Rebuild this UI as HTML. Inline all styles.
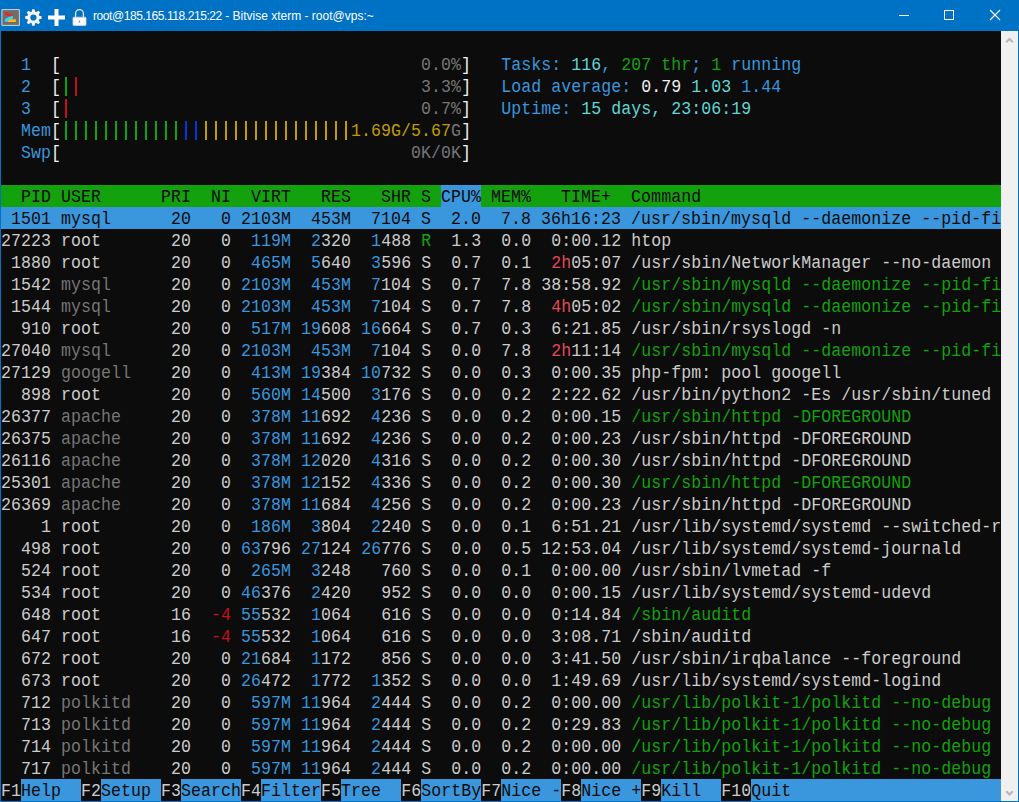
<!DOCTYPE html>
<html><head><meta charset="utf-8"><style>
html,body{margin:0;padding:0;}
body{width:1019px;height:802px;background:#0072C6;position:relative;overflow:hidden;}
#title{position:absolute;left:0;top:0;width:1019px;height:31px;background:#0072C6;}
#title .t{position:absolute;left:93px;top:9px;font:12px "Liberation Sans",sans-serif;letter-spacing:-0.2px;color:#fff;white-space:pre;}
#term{position:absolute;left:1px;top:31px;width:1000px;height:770px;background:#0C0C0C;overflow:hidden;}
#sb{position:absolute;left:1001px;top:31px;width:17px;height:770px;background:#F0F0F0;}
.r{position:absolute;left:0;height:22px;width:1000px;white-space:pre;font-family:"Liberation Mono",monospace;font-size:18px;letter-spacing:0.0696px;line-height:22px;color:#CCCCCC;transform:scaleX(0.92);transform-origin:0 0;}
.bg{position:absolute;height:22px;}
</style></head><body>

<div id="title">
<svg width="100" height="31" style="position:absolute;left:0;top:0">
<path d="M1.9 9.6 H19.4 V25.4 H1.9 Z" fill="#6E6E6E" stroke="#D9D2CC" stroke-width="1" stroke-linejoin="bevel"/>
<path d="M5 12 L7 12.2 L9.5 14 L12.9 15 L12.9 15.7 L9.3 16.6 L5 14.6 Z" fill="#F5231E"/>
<path d="M4.9 19.2 L9 16.8 L13 16 L13 18.6 L7.5 21.8 L4.9 21.8 Z" fill="#38D4F5"/>
<path d="M7.8 20.8 L10.5 19.3 L15.9 19.2 L15.9 21.9 L7.8 21.9 Z" fill="#FDB813"/>
<g transform="translate(33.4,17.5)" fill="#F6F4F2">
<circle r="6"/>
<path transform="rotate(0)" d="M-1.9 -5 L-1.2 -8.2 L1.2 -8.2 L1.9 -5 Z"/><path transform="rotate(45)" d="M-1.9 -5 L-1.2 -8.2 L1.2 -8.2 L1.9 -5 Z"/><path transform="rotate(90)" d="M-1.9 -5 L-1.2 -8.2 L1.2 -8.2 L1.9 -5 Z"/><path transform="rotate(135)" d="M-1.9 -5 L-1.2 -8.2 L1.2 -8.2 L1.9 -5 Z"/><path transform="rotate(180)" d="M-1.9 -5 L-1.2 -8.2 L1.2 -8.2 L1.9 -5 Z"/><path transform="rotate(225)" d="M-1.9 -5 L-1.2 -8.2 L1.2 -8.2 L1.9 -5 Z"/><path transform="rotate(270)" d="M-1.9 -5 L-1.2 -8.2 L1.2 -8.2 L1.9 -5 Z"/><path transform="rotate(315)" d="M-1.9 -5 L-1.2 -8.2 L1.2 -8.2 L1.9 -5 Z"/>
<circle r="3.1" fill="#0072C6"/>
</g>
<rect x="48" y="15.5" width="17" height="4" fill="#fff"/>
<rect x="54.5" y="9" width="4" height="17" fill="#fff"/>
<path d="M75.6 17.5 V13.5 A3.9 3.9 0 0 1 83.4 13.5 V17.5" fill="none" stroke="#E8E4E0" stroke-width="1.3"/>
<rect x="73" y="17.2" width="13" height="8.3" rx="0.8" fill="#FAFAFA" stroke="#DDD6D0" stroke-width="0.8"/>
<path d="M79.5 19.8 L78.6 22.5 H80.4 Z" fill="#888"/>
</svg>
<div class="t"><span style="letter-spacing:-0.43px">root@185.165.118.215:22</span><span style="letter-spacing:0px"> - Bitvise xterm - root@vps:~</span></div>
<svg width="120" height="31" style="position:absolute;left:890px;top:0">
<rect x="9" y="15" width="10" height="1" fill="#fff"/>
<rect x="54.5" y="10.5" width="9" height="9" fill="none" stroke="#fff" stroke-width="1"/>
<path d="M100 10 L110 20 M110 10 L100 20" stroke="#fff" stroke-width="1.1"/>
</svg>
</div>
<div id="term">
<div style="position:absolute;top:46px;left:64px;width:2px;height:19px;background:#13A10E"></div>
<div style="position:absolute;top:46px;left:74px;width:2px;height:19px;background:#C50F1F"></div>
<div style="position:absolute;top:68px;left:64px;width:2px;height:19px;background:#C50F1F"></div>
<div style="position:absolute;top:90px;left:64px;width:2px;height:19px;background:#13A10E"></div>
<div style="position:absolute;top:90px;left:74px;width:2px;height:19px;background:#13A10E"></div>
<div style="position:absolute;top:90px;left:84px;width:2px;height:19px;background:#13A10E"></div>
<div style="position:absolute;top:90px;left:94px;width:2px;height:19px;background:#13A10E"></div>
<div style="position:absolute;top:90px;left:104px;width:2px;height:19px;background:#13A10E"></div>
<div style="position:absolute;top:90px;left:114px;width:2px;height:19px;background:#13A10E"></div>
<div style="position:absolute;top:90px;left:124px;width:2px;height:19px;background:#13A10E"></div>
<div style="position:absolute;top:90px;left:134px;width:2px;height:19px;background:#13A10E"></div>
<div style="position:absolute;top:90px;left:144px;width:2px;height:19px;background:#13A10E"></div>
<div style="position:absolute;top:90px;left:154px;width:2px;height:19px;background:#13A10E"></div>
<div style="position:absolute;top:90px;left:164px;width:2px;height:19px;background:#13A10E"></div>
<div style="position:absolute;top:90px;left:174px;width:2px;height:19px;background:#13A10E"></div>
<div style="position:absolute;top:90px;left:184px;width:2px;height:19px;background:#0037DA"></div>
<div style="position:absolute;top:90px;left:194px;width:2px;height:19px;background:#0037DA"></div>
<div style="position:absolute;top:90px;left:204px;width:2px;height:19px;background:#C19C00"></div>
<div style="position:absolute;top:90px;left:214px;width:2px;height:19px;background:#C19C00"></div>
<div style="position:absolute;top:90px;left:224px;width:2px;height:19px;background:#C19C00"></div>
<div style="position:absolute;top:90px;left:234px;width:2px;height:19px;background:#C19C00"></div>
<div style="position:absolute;top:90px;left:244px;width:2px;height:19px;background:#C19C00"></div>
<div style="position:absolute;top:90px;left:254px;width:2px;height:19px;background:#C19C00"></div>
<div style="position:absolute;top:90px;left:264px;width:2px;height:19px;background:#C19C00"></div>
<div style="position:absolute;top:90px;left:274px;width:2px;height:19px;background:#C19C00"></div>
<div style="position:absolute;top:90px;left:284px;width:2px;height:19px;background:#C19C00"></div>
<div style="position:absolute;top:90px;left:294px;width:2px;height:19px;background:#C19C00"></div>
<div style="position:absolute;top:90px;left:304px;width:2px;height:19px;background:#C19C00"></div>
<div style="position:absolute;top:90px;left:314px;width:2px;height:19px;background:#C19C00"></div>
<div style="position:absolute;top:90px;left:324px;width:2px;height:19px;background:#C19C00"></div>
<div style="position:absolute;top:90px;left:334px;width:2px;height:19px;background:#C19C00"></div>
<div style="position:absolute;top:90px;left:344px;width:2px;height:19px;background:#C19C00"></div>
<div class="bg" style="top:154px;left:0;width:1000px;background:#13A10E"></div>
<div class="bg" style="top:154px;left:440px;width:40px;background:#3A96DD"></div>
<div class="bg" style="top:176px;left:0;width:1000px;background:#3A96DD"></div>
<div class="bg" style="top:748px;left:0;width:1000px;background:#3A96DD"></div>
<div class="bg" style="top:748px;left:0px;width:20px;background:#0C0C0C"></div>
<div class="bg" style="top:748px;left:80px;width:20px;background:#0C0C0C"></div>
<div class="bg" style="top:748px;left:160px;width:20px;background:#0C0C0C"></div>
<div class="bg" style="top:748px;left:240px;width:20px;background:#0C0C0C"></div>
<div class="bg" style="top:748px;left:320px;width:20px;background:#0C0C0C"></div>
<div class="bg" style="top:748px;left:400px;width:20px;background:#0C0C0C"></div>
<div class="bg" style="top:748px;left:480px;width:20px;background:#0C0C0C"></div>
<div class="bg" style="top:748px;left:560px;width:20px;background:#0C0C0C"></div>
<div class="bg" style="top:748px;left:640px;width:20px;background:#0C0C0C"></div>
<div class="bg" style="top:748px;left:720px;width:30px;background:#0C0C0C"></div>
<div class="r" style="top:23px;">  <span style="color:#3A96DD;">1</span>  <span style="color:#F2F2F2;">[</span>                                    <span style="color:#767676;">0.0%</span><span style="color:#F2F2F2;">]</span>   <span style="color:#3A96DD;">Tasks: </span><span style="color:#61D6D6;">116</span><span style="color:#3A96DD;">, </span><span style="color:#13A10E;">207 thr</span><span style="color:#3A96DD;">; </span><span style="color:#13A10E;">1</span><span style="color:#3A96DD;"> running</span></div>
<div class="r" style="top:45px;">  <span style="color:#3A96DD;">2</span>  <span style="color:#F2F2F2;">[</span><span style="color:#13A10E;"> </span><span style="color:#C50F1F;"> </span>                                  <span style="color:#767676;">3.3%</span><span style="color:#F2F2F2;">]</span>   <span style="color:#3A96DD;">Load average: </span><span style="color:#F2F2F2;">0.79 </span><span style="color:#61D6D6;">1.03 </span><span style="color:#3A96DD;">1.44</span></div>
<div class="r" style="top:67px;">  <span style="color:#3A96DD;">3</span>  <span style="color:#F2F2F2;">[</span><span style="color:#C50F1F;"> </span>                                   <span style="color:#767676;">0.7%</span><span style="color:#F2F2F2;">]</span>   <span style="color:#3A96DD;">Uptime: </span><span style="color:#61D6D6;">15 days, 23:06:19</span></div>
<div class="r" style="top:89px;">  <span style="color:#3A96DD;">Mem</span><span style="color:#F2F2F2;">[</span><span style="color:#13A10E;">            </span><span style="color:#0037DA;">  </span><span style="color:#C19C00;">               </span><span style="color:#C19C00;">1.69G/5.67</span><span style="color:#767676;">G</span><span style="color:#F2F2F2;">]</span></div>
<div class="r" style="top:111px;">  <span style="color:#3A96DD;">Swp</span><span style="color:#F2F2F2;">[</span>                                   <span style="color:#767676;">0K/0K</span><span style="color:#F2F2F2;">]</span></div>
<div class="r" style="top:155px;"><span style="color:#0C0C0C;">  PID USER      PRI  NI  VIRT   RES   SHR S </span><span style="color:#0C0C0C;">CPU%</span><span style="color:#0C0C0C;"> MEM%   TIME+  Command</span></div>
<div class="r" style="top:177px;"><span style="color:#0C0C0C;"> 1501 mysql      20   0 2103M  453M  7104 S  2.0  7.8 36h16:23 /usr/sbin/mysqld --daemonize --pid-file=/var/run/mysqld/mysqld.pid</span></div>
<div class="r" style="top:199px;"><span style="color:#CCCCCC;">27223 </span><span style="color:#CCCCCC;">root      </span><span style="color:#CCCCCC;"> 20 </span><span style="color:#CCCCCC;">  0</span> <span style="color:#3A96DD;"> 119M</span> <span style="color:#3A96DD;"> 2</span><span style="color:#CCCCCC;">320</span> <span style="color:#3A96DD;"> 1</span><span style="color:#CCCCCC;">488</span> <span style="color:#13A10E;">R</span> <span style="color:#CCCCCC;"> 1.3  0.0 </span><span style="color:#CCCCCC;"> 0:00.12</span> <span style="color:#CCCCCC;">htop</span></div>
<div class="r" style="top:221px;"><span style="color:#CCCCCC;"> 1880 </span><span style="color:#CCCCCC;">root      </span><span style="color:#CCCCCC;"> 20 </span><span style="color:#CCCCCC;">  0</span> <span style="color:#3A96DD;"> 465M</span> <span style="color:#3A96DD;"> 5</span><span style="color:#CCCCCC;">640</span> <span style="color:#3A96DD;"> 3</span><span style="color:#CCCCCC;">596</span> <span style="color:#CCCCCC;">S</span> <span style="color:#CCCCCC;"> 0.7  0.1 </span><span style="color:#E74856;"> 2h</span><span style="color:#CCCCCC;">05:07</span> <span style="color:#CCCCCC;">/usr/sbin/NetworkManager --no-daemon</span></div>
<div class="r" style="top:243px;"><span style="color:#CCCCCC;"> 1542 </span><span style="color:#767676;">mysql     </span><span style="color:#CCCCCC;"> 20 </span><span style="color:#CCCCCC;">  0</span> <span style="color:#3A96DD;">2103M</span> <span style="color:#3A96DD;"> 453M</span> <span style="color:#3A96DD;"> 7</span><span style="color:#CCCCCC;">104</span> <span style="color:#CCCCCC;">S</span> <span style="color:#CCCCCC;"> 0.7  7.8 </span><span style="color:#CCCCCC;">38:58.92</span> <span style="color:#13A10E;">/usr/sbin/mysqld --daemonize --pid-file=/var/run</span></div>
<div class="r" style="top:265px;"><span style="color:#CCCCCC;"> 1544 </span><span style="color:#767676;">mysql     </span><span style="color:#CCCCCC;"> 20 </span><span style="color:#CCCCCC;">  0</span> <span style="color:#3A96DD;">2103M</span> <span style="color:#3A96DD;"> 453M</span> <span style="color:#3A96DD;"> 7</span><span style="color:#CCCCCC;">104</span> <span style="color:#CCCCCC;">S</span> <span style="color:#CCCCCC;"> 0.7  7.8 </span><span style="color:#E74856;"> 4h</span><span style="color:#CCCCCC;">05:02</span> <span style="color:#13A10E;">/usr/sbin/mysqld --daemonize --pid-file=/var/run</span></div>
<div class="r" style="top:287px;"><span style="color:#CCCCCC;">  910 </span><span style="color:#CCCCCC;">root      </span><span style="color:#CCCCCC;"> 20 </span><span style="color:#CCCCCC;">  0</span> <span style="color:#3A96DD;"> 517M</span> <span style="color:#3A96DD;">19</span><span style="color:#CCCCCC;">608</span> <span style="color:#3A96DD;">16</span><span style="color:#CCCCCC;">664</span> <span style="color:#CCCCCC;">S</span> <span style="color:#CCCCCC;"> 0.7  0.3 </span><span style="color:#CCCCCC;"> 6:21.85</span> <span style="color:#CCCCCC;">/usr/sbin/rsyslogd -n</span></div>
<div class="r" style="top:309px;"><span style="color:#CCCCCC;">27040 </span><span style="color:#767676;">mysql     </span><span style="color:#CCCCCC;"> 20 </span><span style="color:#CCCCCC;">  0</span> <span style="color:#3A96DD;">2103M</span> <span style="color:#3A96DD;"> 453M</span> <span style="color:#3A96DD;"> 7</span><span style="color:#CCCCCC;">104</span> <span style="color:#CCCCCC;">S</span> <span style="color:#CCCCCC;"> 0.0  7.8 </span><span style="color:#E74856;"> 2h</span><span style="color:#CCCCCC;">11:14</span> <span style="color:#13A10E;">/usr/sbin/mysqld --daemonize --pid-file=/var/run</span></div>
<div class="r" style="top:331px;"><span style="color:#CCCCCC;">27129 </span><span style="color:#767676;">googell   </span><span style="color:#CCCCCC;"> 20 </span><span style="color:#CCCCCC;">  0</span> <span style="color:#3A96DD;"> 413M</span> <span style="color:#3A96DD;">19</span><span style="color:#CCCCCC;">384</span> <span style="color:#3A96DD;">10</span><span style="color:#CCCCCC;">732</span> <span style="color:#CCCCCC;">S</span> <span style="color:#CCCCCC;"> 0.0  0.3 </span><span style="color:#CCCCCC;"> 0:00.35</span> <span style="color:#CCCCCC;">php-fpm: pool googell</span></div>
<div class="r" style="top:353px;"><span style="color:#CCCCCC;">  898 </span><span style="color:#CCCCCC;">root      </span><span style="color:#CCCCCC;"> 20 </span><span style="color:#CCCCCC;">  0</span> <span style="color:#3A96DD;"> 560M</span> <span style="color:#3A96DD;">14</span><span style="color:#CCCCCC;">500</span> <span style="color:#3A96DD;"> 3</span><span style="color:#CCCCCC;">176</span> <span style="color:#CCCCCC;">S</span> <span style="color:#CCCCCC;"> 0.0  0.2 </span><span style="color:#CCCCCC;"> 2:22.62</span> <span style="color:#CCCCCC;">/usr/bin/python2 -Es /usr/sbin/tuned</span></div>
<div class="r" style="top:375px;"><span style="color:#CCCCCC;">26377 </span><span style="color:#767676;">apache    </span><span style="color:#CCCCCC;"> 20 </span><span style="color:#CCCCCC;">  0</span> <span style="color:#3A96DD;"> 378M</span> <span style="color:#3A96DD;">11</span><span style="color:#CCCCCC;">692</span> <span style="color:#3A96DD;"> 4</span><span style="color:#CCCCCC;">236</span> <span style="color:#CCCCCC;">S</span> <span style="color:#CCCCCC;"> 0.0  0.2 </span><span style="color:#CCCCCC;"> 0:00.15</span> <span style="color:#13A10E;">/usr/sbin/httpd -DFOREGROUND</span></div>
<div class="r" style="top:397px;"><span style="color:#CCCCCC;">26375 </span><span style="color:#767676;">apache    </span><span style="color:#CCCCCC;"> 20 </span><span style="color:#CCCCCC;">  0</span> <span style="color:#3A96DD;"> 378M</span> <span style="color:#3A96DD;">11</span><span style="color:#CCCCCC;">692</span> <span style="color:#3A96DD;"> 4</span><span style="color:#CCCCCC;">236</span> <span style="color:#CCCCCC;">S</span> <span style="color:#CCCCCC;"> 0.0  0.2 </span><span style="color:#CCCCCC;"> 0:00.23</span> <span style="color:#CCCCCC;">/usr/sbin/httpd -DFOREGROUND</span></div>
<div class="r" style="top:419px;"><span style="color:#CCCCCC;">26116 </span><span style="color:#767676;">apache    </span><span style="color:#CCCCCC;"> 20 </span><span style="color:#CCCCCC;">  0</span> <span style="color:#3A96DD;"> 378M</span> <span style="color:#3A96DD;">12</span><span style="color:#CCCCCC;">020</span> <span style="color:#3A96DD;"> 4</span><span style="color:#CCCCCC;">316</span> <span style="color:#CCCCCC;">S</span> <span style="color:#CCCCCC;"> 0.0  0.2 </span><span style="color:#CCCCCC;"> 0:00.30</span> <span style="color:#CCCCCC;">/usr/sbin/httpd -DFOREGROUND</span></div>
<div class="r" style="top:441px;"><span style="color:#CCCCCC;">25301 </span><span style="color:#767676;">apache    </span><span style="color:#CCCCCC;"> 20 </span><span style="color:#CCCCCC;">  0</span> <span style="color:#3A96DD;"> 378M</span> <span style="color:#3A96DD;">12</span><span style="color:#CCCCCC;">152</span> <span style="color:#3A96DD;"> 4</span><span style="color:#CCCCCC;">336</span> <span style="color:#CCCCCC;">S</span> <span style="color:#CCCCCC;"> 0.0  0.2 </span><span style="color:#CCCCCC;"> 0:00.30</span> <span style="color:#13A10E;">/usr/sbin/httpd -DFOREGROUND</span></div>
<div class="r" style="top:463px;"><span style="color:#CCCCCC;">26369 </span><span style="color:#767676;">apache    </span><span style="color:#CCCCCC;"> 20 </span><span style="color:#CCCCCC;">  0</span> <span style="color:#3A96DD;"> 378M</span> <span style="color:#3A96DD;">11</span><span style="color:#CCCCCC;">684</span> <span style="color:#3A96DD;"> 4</span><span style="color:#CCCCCC;">256</span> <span style="color:#CCCCCC;">S</span> <span style="color:#CCCCCC;"> 0.0  0.2 </span><span style="color:#CCCCCC;"> 0:00.23</span> <span style="color:#CCCCCC;">/usr/sbin/httpd -DFOREGROUND</span></div>
<div class="r" style="top:485px;"><span style="color:#CCCCCC;">    1 </span><span style="color:#CCCCCC;">root      </span><span style="color:#CCCCCC;"> 20 </span><span style="color:#CCCCCC;">  0</span> <span style="color:#3A96DD;"> 186M</span> <span style="color:#3A96DD;"> 3</span><span style="color:#CCCCCC;">804</span> <span style="color:#3A96DD;"> 2</span><span style="color:#CCCCCC;">240</span> <span style="color:#CCCCCC;">S</span> <span style="color:#CCCCCC;"> 0.0  0.1 </span><span style="color:#CCCCCC;"> 6:51.21</span> <span style="color:#CCCCCC;">/usr/lib/systemd/systemd --switched-root --system</span></div>
<div class="r" style="top:507px;"><span style="color:#CCCCCC;">  498 </span><span style="color:#CCCCCC;">root      </span><span style="color:#CCCCCC;"> 20 </span><span style="color:#CCCCCC;">  0</span> <span style="color:#3A96DD;">63</span><span style="color:#CCCCCC;">796</span> <span style="color:#3A96DD;">27</span><span style="color:#CCCCCC;">124</span> <span style="color:#3A96DD;">26</span><span style="color:#CCCCCC;">776</span> <span style="color:#CCCCCC;">S</span> <span style="color:#CCCCCC;"> 0.0  0.5 </span><span style="color:#CCCCCC;">12:53.04</span> <span style="color:#CCCCCC;">/usr/lib/systemd/systemd-journald</span></div>
<div class="r" style="top:529px;"><span style="color:#CCCCCC;">  524 </span><span style="color:#CCCCCC;">root      </span><span style="color:#CCCCCC;"> 20 </span><span style="color:#CCCCCC;">  0</span> <span style="color:#3A96DD;"> 265M</span> <span style="color:#3A96DD;"> 3</span><span style="color:#CCCCCC;">248</span> <span style="color:#CCCCCC;">  760</span> <span style="color:#CCCCCC;">S</span> <span style="color:#CCCCCC;"> 0.0  0.1 </span><span style="color:#CCCCCC;"> 0:00.00</span> <span style="color:#CCCCCC;">/usr/sbin/lvmetad -f</span></div>
<div class="r" style="top:551px;"><span style="color:#CCCCCC;">  534 </span><span style="color:#CCCCCC;">root      </span><span style="color:#CCCCCC;"> 20 </span><span style="color:#CCCCCC;">  0</span> <span style="color:#3A96DD;">46</span><span style="color:#CCCCCC;">376</span> <span style="color:#3A96DD;"> 2</span><span style="color:#CCCCCC;">420</span> <span style="color:#CCCCCC;">  952</span> <span style="color:#CCCCCC;">S</span> <span style="color:#CCCCCC;"> 0.0  0.0 </span><span style="color:#CCCCCC;"> 0:00.15</span> <span style="color:#CCCCCC;">/usr/lib/systemd/systemd-udevd</span></div>
<div class="r" style="top:573px;"><span style="color:#CCCCCC;">  648 </span><span style="color:#CCCCCC;">root      </span><span style="color:#CCCCCC;"> 16 </span><span style="color:#C50F1F;"> -4</span> <span style="color:#3A96DD;">55</span><span style="color:#CCCCCC;">532</span> <span style="color:#3A96DD;"> 1</span><span style="color:#CCCCCC;">064</span> <span style="color:#CCCCCC;">  616</span> <span style="color:#CCCCCC;">S</span> <span style="color:#CCCCCC;"> 0.0  0.0 </span><span style="color:#CCCCCC;"> 0:14.84</span> <span style="color:#13A10E;">/sbin/auditd</span></div>
<div class="r" style="top:595px;"><span style="color:#CCCCCC;">  647 </span><span style="color:#CCCCCC;">root      </span><span style="color:#CCCCCC;"> 16 </span><span style="color:#C50F1F;"> -4</span> <span style="color:#3A96DD;">55</span><span style="color:#CCCCCC;">532</span> <span style="color:#3A96DD;"> 1</span><span style="color:#CCCCCC;">064</span> <span style="color:#CCCCCC;">  616</span> <span style="color:#CCCCCC;">S</span> <span style="color:#CCCCCC;"> 0.0  0.0 </span><span style="color:#CCCCCC;"> 3:08.71</span> <span style="color:#CCCCCC;">/sbin/auditd</span></div>
<div class="r" style="top:617px;"><span style="color:#CCCCCC;">  672 </span><span style="color:#CCCCCC;">root      </span><span style="color:#CCCCCC;"> 20 </span><span style="color:#CCCCCC;">  0</span> <span style="color:#3A96DD;">21</span><span style="color:#CCCCCC;">684</span> <span style="color:#3A96DD;"> 1</span><span style="color:#CCCCCC;">172</span> <span style="color:#CCCCCC;">  856</span> <span style="color:#CCCCCC;">S</span> <span style="color:#CCCCCC;"> 0.0  0.0 </span><span style="color:#CCCCCC;"> 3:41.50</span> <span style="color:#CCCCCC;">/usr/sbin/irqbalance --foreground</span></div>
<div class="r" style="top:639px;"><span style="color:#CCCCCC;">  673 </span><span style="color:#CCCCCC;">root      </span><span style="color:#CCCCCC;"> 20 </span><span style="color:#CCCCCC;">  0</span> <span style="color:#3A96DD;">26</span><span style="color:#CCCCCC;">472</span> <span style="color:#3A96DD;"> 1</span><span style="color:#CCCCCC;">772</span> <span style="color:#3A96DD;"> 1</span><span style="color:#CCCCCC;">352</span> <span style="color:#CCCCCC;">S</span> <span style="color:#CCCCCC;"> 0.0  0.0 </span><span style="color:#CCCCCC;"> 1:49.69</span> <span style="color:#CCCCCC;">/usr/lib/systemd/systemd-logind</span></div>
<div class="r" style="top:661px;"><span style="color:#CCCCCC;">  712 </span><span style="color:#767676;">polkitd   </span><span style="color:#CCCCCC;"> 20 </span><span style="color:#CCCCCC;">  0</span> <span style="color:#3A96DD;"> 597M</span> <span style="color:#3A96DD;">11</span><span style="color:#CCCCCC;">964</span> <span style="color:#3A96DD;"> 2</span><span style="color:#CCCCCC;">444</span> <span style="color:#CCCCCC;">S</span> <span style="color:#CCCCCC;"> 0.0  0.2 </span><span style="color:#CCCCCC;"> 0:00.00</span> <span style="color:#13A10E;">/usr/lib/polkit-1/polkitd --no-debug</span></div>
<div class="r" style="top:683px;"><span style="color:#CCCCCC;">  713 </span><span style="color:#767676;">polkitd   </span><span style="color:#CCCCCC;"> 20 </span><span style="color:#CCCCCC;">  0</span> <span style="color:#3A96DD;"> 597M</span> <span style="color:#3A96DD;">11</span><span style="color:#CCCCCC;">964</span> <span style="color:#3A96DD;"> 2</span><span style="color:#CCCCCC;">444</span> <span style="color:#CCCCCC;">S</span> <span style="color:#CCCCCC;"> 0.0  0.2 </span><span style="color:#CCCCCC;"> 0:29.83</span> <span style="color:#13A10E;">/usr/lib/polkit-1/polkitd --no-debug</span></div>
<div class="r" style="top:705px;"><span style="color:#CCCCCC;">  714 </span><span style="color:#767676;">polkitd   </span><span style="color:#CCCCCC;"> 20 </span><span style="color:#CCCCCC;">  0</span> <span style="color:#3A96DD;"> 597M</span> <span style="color:#3A96DD;">11</span><span style="color:#CCCCCC;">964</span> <span style="color:#3A96DD;"> 2</span><span style="color:#CCCCCC;">444</span> <span style="color:#CCCCCC;">S</span> <span style="color:#CCCCCC;"> 0.0  0.2 </span><span style="color:#CCCCCC;"> 0:00.00</span> <span style="color:#13A10E;">/usr/lib/polkit-1/polkitd --no-debug</span></div>
<div class="r" style="top:727px;"><span style="color:#CCCCCC;">  717 </span><span style="color:#767676;">polkitd   </span><span style="color:#CCCCCC;"> 20 </span><span style="color:#CCCCCC;">  0</span> <span style="color:#3A96DD;"> 597M</span> <span style="color:#3A96DD;">11</span><span style="color:#CCCCCC;">964</span> <span style="color:#3A96DD;"> 2</span><span style="color:#CCCCCC;">444</span> <span style="color:#CCCCCC;">S</span> <span style="color:#CCCCCC;"> 0.0  0.2 </span><span style="color:#CCCCCC;"> 0:00.00</span> <span style="color:#13A10E;">/usr/lib/polkit-1/polkitd --no-debug</span></div>
<div class="r" style="top:749px;"><span style="color:#CCCCCC;">F1</span><span style="color:#0C0C0C;">Help  </span><span style="color:#CCCCCC;">F2</span><span style="color:#0C0C0C;">Setup </span><span style="color:#CCCCCC;">F3</span><span style="color:#0C0C0C;">Search</span><span style="color:#CCCCCC;">F4</span><span style="color:#0C0C0C;">Filter</span><span style="color:#CCCCCC;">F5</span><span style="color:#0C0C0C;">Tree  </span><span style="color:#CCCCCC;">F6</span><span style="color:#0C0C0C;">SortBy</span><span style="color:#CCCCCC;">F7</span><span style="color:#0C0C0C;">Nice -</span><span style="color:#CCCCCC;">F8</span><span style="color:#0C0C0C;">Nice +</span><span style="color:#CCCCCC;">F9</span><span style="color:#0C0C0C;">Kill  </span><span style="color:#CCCCCC;">F10</span><span style="color:#0C0C0C;">Quit  </span></div>
</div>
<div id="sb"><svg width="17" height="770" style="position:absolute;left:0;top:0">
<path d="M5.2 11.2 L8.5 7.9 L11.8 11.2" fill="none" stroke="#B8B8B8" stroke-width="2.1"/>
<path d="M5.2 760.2 L8.5 763.5 L11.8 760.2" fill="none" stroke="#B8B8B8" stroke-width="2.1"/>
</svg></div>
</body></html>
